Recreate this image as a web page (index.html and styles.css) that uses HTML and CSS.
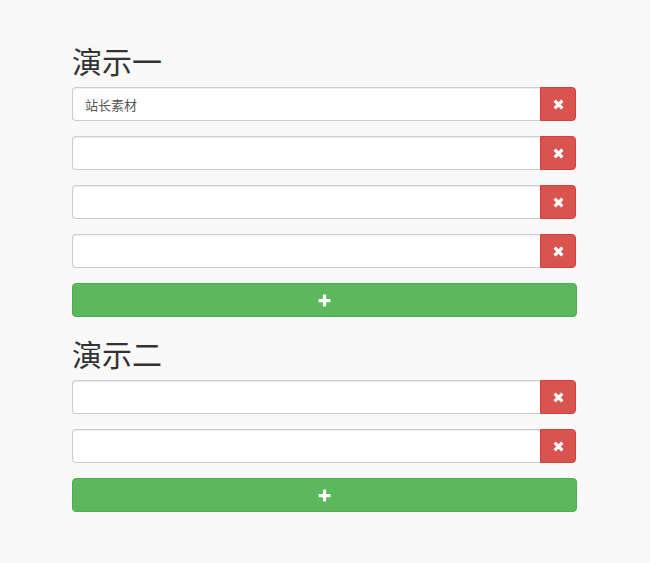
FILE: index.html
```html
<!DOCTYPE html>
<html lang="zh-CN">
<head>
  <meta charset="UTF-8">
  <meta name="viewport" content="width=device-width, initial-scale=1.0">
  <title>演示</title>
  <link rel="stylesheet" href="styles.css">
</head>
<body>
  <div class="container">
    <h2>演示一</h2>
    <div class="list">
      <div class="input-group">
        <input class="form-control" type="text" value="站长素材">
        <button class="btn btn-danger"><svg viewBox="0 0 10 10"><path d="M1.5 1.5L8.5 8.5M8.5 1.5L1.5 8.5"/></svg></button>
      </div>
      <div class="input-group">
        <input class="form-control" type="text">
        <button class="btn btn-danger"><svg viewBox="0 0 10 10"><path d="M1.5 1.5L8.5 8.5M8.5 1.5L1.5 8.5"/></svg></button>
      </div>
      <div class="input-group">
        <input class="form-control" type="text">
        <button class="btn btn-danger"><svg viewBox="0 0 10 10"><path d="M1.5 1.5L8.5 8.5M8.5 1.5L1.5 8.5"/></svg></button>
      </div>
      <div class="input-group">
        <input class="form-control" type="text">
        <button class="btn btn-danger"><svg viewBox="0 0 10 10"><path d="M1.5 1.5L8.5 8.5M8.5 1.5L1.5 8.5"/></svg></button>
      </div>
    </div>
    <button class="btn btn-success"><svg viewBox="0 0 12 12"><path d="M6 0.5V11.5M0.5 6H11.5"/></svg></button>

    <h2>演示二</h2>
    <div class="list">
      <div class="input-group">
        <input class="form-control" type="text">
        <button class="btn btn-danger"><svg viewBox="0 0 10 10"><path d="M1.5 1.5L8.5 8.5M8.5 1.5L1.5 8.5"/></svg></button>
      </div>
      <div class="input-group">
        <input class="form-control" type="text">
        <button class="btn btn-danger"><svg viewBox="0 0 10 10"><path d="M1.5 1.5L8.5 8.5M8.5 1.5L1.5 8.5"/></svg></button>
      </div>
    </div>
    <button class="btn btn-success"><svg viewBox="0 0 12 12"><path d="M6 0.5V11.5M0.5 6H11.5"/></svg></button>
  </div>
</body>
</html>
```

FILE: styles.css
```css
*{
  margin: 0;
  padding: 0;
  box-sizing: border-box;
}
body{
  background-color: #f9f9f9;
  font-family: "Liberation Sans", "Noto Sans CJK SC", sans-serif;
  font-size: 14px;
  color: #333;
}
.container{
  width: 505px;
  margin-left: 72px;
  padding-top: 24px;
  padding-bottom: 20px;
}
h2{
  font-family: "Noto Sans CJK SC", sans-serif;
  font-weight: 400;
  font-size: 30px;
  line-height: 33px;
  margin-top: 20px;
  margin-bottom: 10px;
  color: #333;
}
.input-group{
  display: flex;
  width: 504px;
  height: 34px;
  margin-bottom: 15px;
}
.form-control{
  flex: 1;
  min-width: 0;
  height: 34px;
  padding: 6px 12px;
  border: 1px solid #ccc;
  border-right: none;
  border-radius: 4px 0 0 4px;
  background-color: #fff;
  box-shadow: inset 0 1px 1px rgba(0,0,0,0.075);
  font-family: "Liberation Sans", "Noto Sans CJK SC", sans-serif;
  font-size: 13px;
  color: #555;
  outline: none;
}
.btn{
  border: 1px solid transparent;
  cursor: pointer;
  display: flex;
  justify-content: center;
  align-items: center;
}
.btn svg{
  fill: none;
  stroke: #fff;
  stroke-linecap: butt;
}
.btn-danger{
  width: 36px;
  height: 34px;
  background-color: #d9534f;
  border-color: #d43f3a;
  border-radius: 0 4px 4px 0;
}
.btn-danger svg{
  width: 11px;
  height: 11px;
  stroke-width: 3;
}
.btn-success{
  width: 505px;
  height: 34px;
  background-color: #5cb85c;
  border-color: #4cae4c;
  border-radius: 4px;
}
.btn-success svg{
  width: 13px;
  height: 13px;
  stroke-width: 3;
}
```
